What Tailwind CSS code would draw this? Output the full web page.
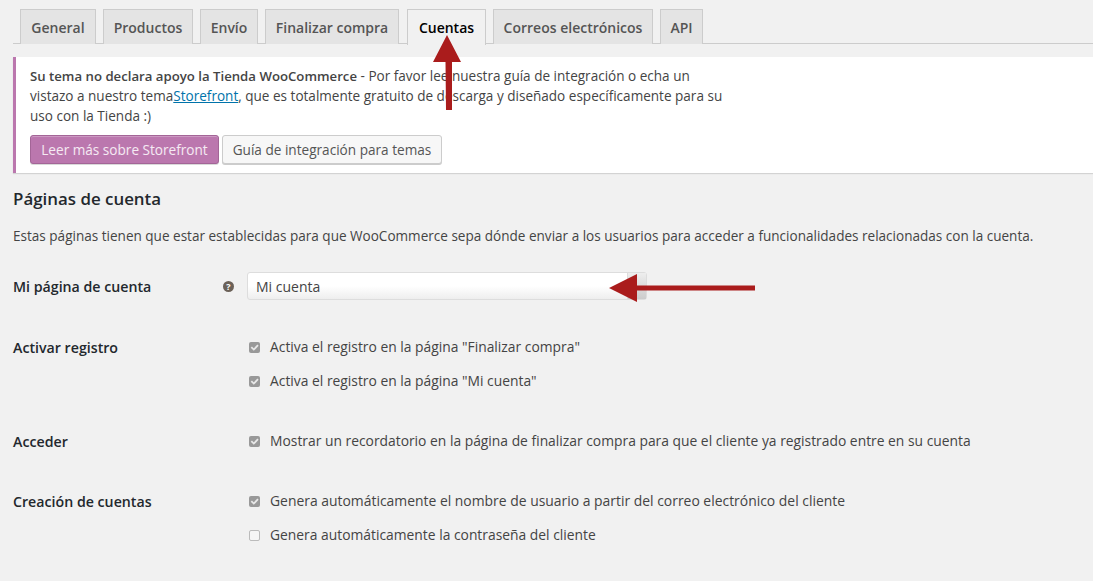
<!DOCTYPE html>
<html lang="es">
<head>
    <meta charset="UTF-8">
    <title>Cuentas</title>
    <script src="https://cdn.jsdelivr.net/npm/@tailwindcss/browser@4"></script>
</head>
<body class="relative h-[581px] w-[1093px] overflow-hidden bg-[#f1f1f1] font-['Open_Sans',sans-serif] text-[13.85px] text-[#444]">
    <!-- tabs -->
    <nav class="ml-[13px] mt-[9px] flex h-[35px] gap-[7px] border-b border-[#ccc] pl-[7px] text-[14px] font-semibold text-[#555]">
        <a class="flex h-[35px] w-[76px] items-center justify-center border border-b-0 border-[#ccc] bg-[#e4e4e4]">General</a>
        <a class="flex h-[35px] w-[90px] items-center justify-center border border-b-0 border-[#ccc] bg-[#e4e4e4]">Productos</a>
        <a class="flex h-[35px] w-[58px] items-center justify-center border border-b-0 border-[#ccc] bg-[#e4e4e4]">Envío</a>
        <a class="flex h-[35px] w-[134px] items-center justify-center border border-b-0 border-[#ccc] bg-[#e4e4e4]">Finalizar compra</a>
        <a class="ml-px flex h-[36px] w-[79px] items-center justify-center border border-b-0 border-[#ccc] bg-[#f1f1f1] text-black">Cuentas</a>
        <a class="flex h-[35px] w-[160px] items-center justify-center border border-b-0 border-[#ccc] bg-[#e4e4e4]">Correos electrónicos</a>
        <a class="flex h-[35px] w-[43px] items-center justify-center border border-b-0 border-[#ccc] bg-[#e4e4e4]">API</a>
    </nav>

    <!-- notice -->
    <div class="ml-[13px] mt-[13px] h-[116px] border-l-[3px] border-[#bb77ae] bg-white pl-[14px] pt-[9px] shadow-[0_1px_1px_rgba(0,0,0,0.12)]">
        <p class="w-[700px] text-[13.56px] leading-[20px]"><b class="text-[13.2px] font-semibold">Su tema no declara apoyo la Tienda WooCommerce</b> - Por favor lee nuestra guía de integración o echa un vistazo a nuestro tema<a class="text-[#0073aa] underline">Storefront</a>, que es totalmente gratuito de descarga y diseñado específicamente para su uso con la Tienda :)</p>
        <div class="mt-[9px] flex gap-[3px] text-[13.6px]">
            <a class="flex h-[29px] w-[189px] items-center justify-center rounded-[3px] border border-[#a36597] bg-[#bb77ae] pt-px text-white/85 shadow-[inset_0_1px_0_rgba(255,255,255,0.25),0_1px_0_rgba(0,0,0,0.15)]">Leer más sobre Storefront</a>
            <a class="flex h-[29px] w-[220px] items-center justify-center rounded-[3px] border border-[#ccc] bg-[#f7f7f7] pt-px text-[#555] shadow-[0_1px_0_#ccc]">Guía de integración para temas</a>
        </div>
    </div>

    <h2 class="ml-[13px] mt-[14px] text-[16.9px] leading-[24px] font-semibold text-[#23282d]">Páginas de cuenta</h2>
    <p class="ml-[13px] mt-[15px] text-[13.56px] leading-[20px]">Estas páginas tienen que estar establecidas para que WooCommerce sepa dónde enviar a los usuarios para acceder a funcionalidades relacionadas con la cuenta.</p>

    <!-- settings form -->
    <div class="ml-[13px] mt-[26px] flex flex-col">
        <div class="flex h-[28px] items-center">
            <label class="w-[210px] pt-[2px] text-[14.2px] font-semibold text-[#23282d]">Mi página de cuenta</label>
            <svg class="h-[11px] w-[11px]" viewBox="0 0 11 11"><circle cx="5.5" cy="5.5" r="5.5" fill="#6b6158"/><text x="5.5" y="8.6" text-anchor="middle" font-size="9" font-weight="700" fill="#fff" font-family="Open Sans">?</text></svg>
            <div class="ml-[13px] flex h-[28px] w-[400px] items-center justify-between rounded-[3px] border border-[#ddd] bg-gradient-to-b from-white from-50% to-[#eee] pl-[8px] text-[14px] text-[#444]">
                <span>Mi cuenta</span>
                <span class="h-full w-[19px] border-l border-[#ddd] bg-gradient-to-b from-[#eee] to-[#ccc]"></span>
            </div>
        </div>

        <div class="mt-[38px] flex items-start">
            <label class="w-[236px] text-[14.2px] font-semibold leading-[20px] text-[#23282d]">Activar registro</label>
            <div class="-mt-px flex flex-col gap-[14px]">
                <div class="flex h-[20px] items-center gap-[10px]">
                    <svg class="h-[11px] w-[11px] shrink-0" viewBox="0 0 11 11"><rect width="11" height="11" rx="2" fill="#999"/><path d="M2.300 5.200 L4.800 7.600 L9 3.200" fill="none" stroke="#e8e8e8" stroke-width="1.800"/></svg>
                    <span>Activa el registro en la página "Finalizar compra"</span>
                </div>
                <div class="flex h-[20px] items-center gap-[10px]">
                    <svg class="h-[11px] w-[11px] shrink-0" viewBox="0 0 11 11"><rect width="11" height="11" rx="2" fill="#999"/><path d="M2.300 5.200 L4.800 7.600 L9 3.200" fill="none" stroke="#e8e8e8" stroke-width="1.800"/></svg>
                    <span>Activa el registro en la página "Mi cuenta"</span>
                </div>
            </div>
        </div>

        <div class="mt-[41px] flex items-start">
            <label class="w-[236px] text-[14.2px] font-semibold leading-[20px] text-[#23282d]">Acceder</label>
            <div class="-mt-px flex h-[20px] items-center gap-[10px]">
                <svg class="h-[11px] w-[11px] shrink-0" viewBox="0 0 11 11"><rect width="11" height="11" rx="2" fill="#999"/><path d="M2.300 5.200 L4.800 7.600 L9 3.200" fill="none" stroke="#e8e8e8" stroke-width="1.800"/></svg>
                <span>Mostrar un recordatorio en la página de finalizar compra para que el cliente ya registrado entre en su cuenta</span>
            </div>
        </div>

        <div class="mt-[40px] flex items-start">
            <label class="w-[236px] text-[14.2px] font-semibold leading-[20px] text-[#23282d]">Creación de cuentas</label>
            <div class="-mt-px flex flex-col gap-[14px]">
                <div class="flex h-[20px] items-center gap-[10px]">
                    <svg class="h-[11px] w-[11px] shrink-0" viewBox="0 0 11 11"><rect width="11" height="11" rx="2" fill="#999"/><path d="M2.300 5.200 L4.800 7.600 L9 3.200" fill="none" stroke="#e8e8e8" stroke-width="1.800"/></svg>
                    <span class="text-[13.92px]">Genera automáticamente el nombre de usuario a partir del correo electrónico del cliente</span>
                </div>
                <div class="flex h-[20px] items-center gap-[10px]">
                    <span class="h-[11px] w-[11px] shrink-0 rounded-[2px] border border-[#bbb] bg-[#f6f6f6]"></span>
                    <span>Genera automáticamente la contraseña del cliente</span>
                </div>
            </div>
        </div>
    </div>

    <!-- red annotation arrows -->
    <svg class="absolute left-0 top-0" width="1093" height="581" viewBox="0 0 1093 581">
        <path d="M447 35 L461 62 L452 62 L452 110 L446 110 L445.500 62 L433 62 Z" fill="#aa1c1c"/>
        <path d="M609 288 L637 274 L637 285.500 L755 285.500 L755 290.500 L637 290.500 L637 302 Z" fill="#aa1c1c"/>
    </svg>
</body>
</html>
